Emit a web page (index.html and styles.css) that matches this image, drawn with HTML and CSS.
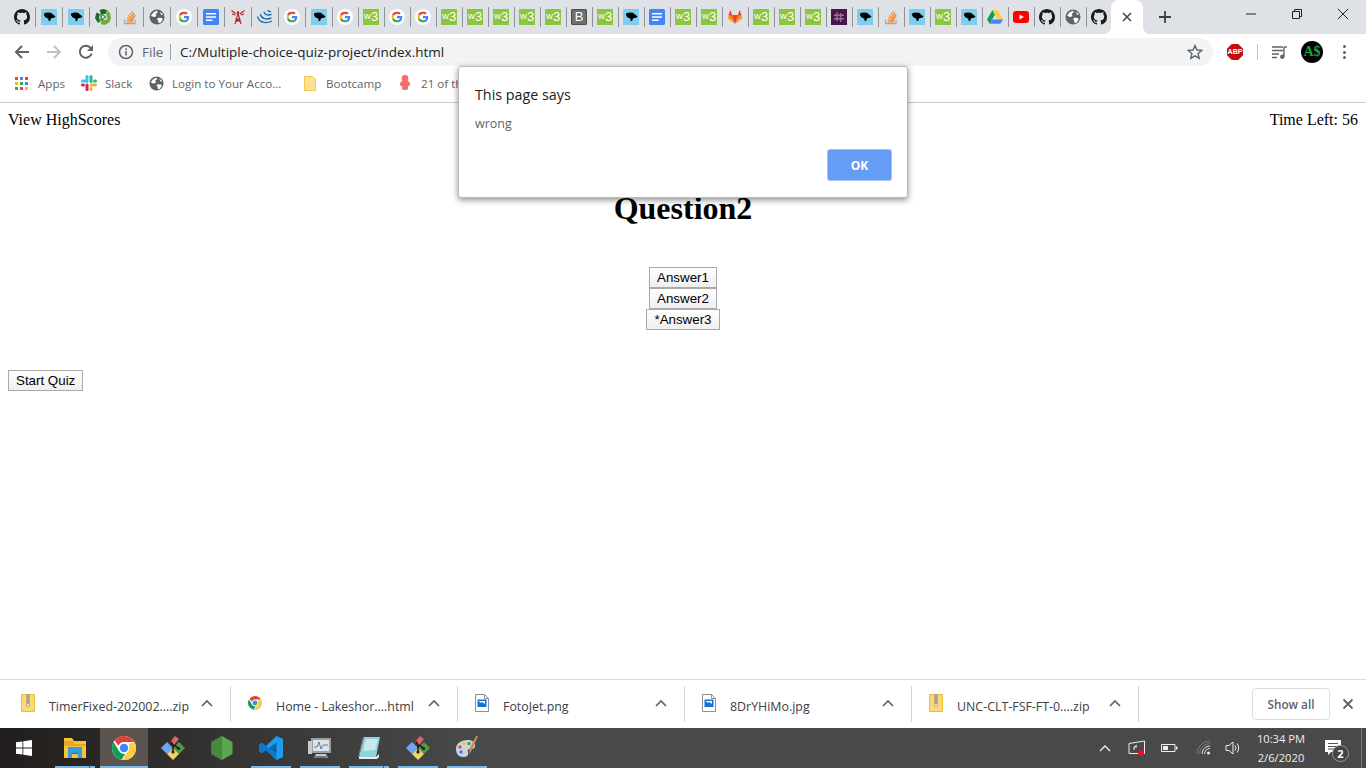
FILE: index.html
```html
<!DOCTYPE html>
<html lang="en">
<head>
<meta charset="utf-8">
<title>Multiple choice quiz</title>
<link rel="stylesheet" href="styles.css">
</head>
<body>
<svg class="defs" aria-hidden="true">
  <symbol id="gh" viewBox="0 0 16 16"><path fill="#1b1b1b" d="M8 0C3.58 0 0 3.58 0 8c0 3.54 2.29 6.53 5.47 7.59.4.07.55-.17.55-.38 0-.19-.01-.82-.01-1.49-2.01.37-2.53-.49-2.69-.94-.09-.23-.48-.94-.82-1.13-.28-.15-.68-.52-.01-.53.63-.01 1.08.58 1.23.82.72 1.21 1.87.87 2.33.66.07-.52.28-.87.51-1.07-1.78-.2-3.64-.89-3.64-3.95 0-.87.31-1.59.82-2.15-.08-.2-.36-1.02.08-2.12 0 0 .67-.21 2.2.82.64-.18 1.32-.27 2-.27.68 0 1.36.09 2 .27 1.53-1.04 2.2-.82 2.2-.82.44 1.1.16 1.92.08 2.12.51.56.82 1.27.82 2.15 0 3.07-1.87 3.75-3.65 3.95.29.25.54.73.54 1.48 0 1.07-.01 1.93-.01 2.2 0 .21.15.46.55.38A8.013 8.013 0 0016 8c0-4.42-3.58-8-8-8z"/></symbol>
  <symbol id="pn" viewBox="0 0 16 16"><rect width="16" height="16" fill="#7fcdee"/><path fill="#000" d="M3 4.6 6 3.4l4 .4 2 1.6 2.6 2.1-1.5 1.3-3 .4-.9 2.5-1.4.5-.6-2.6-2.6-1-1.4-2.1z"/></symbol>
  <symbol id="rc" viewBox="0 0 16 16"><path fill="#1f6b2a" d="M4.500 1 8 0l4 1-1.500 4H6zM0 9l1.500-5.500 3.500 1.500-1 4 1.500 3L3 14z"/><path fill="#6fae3c" d="M12 1l3 3 1 5.500-3.500-.5-1.500-4zM5.500 12.500 7 11h4l1.500-2 3.500.5-2 4-4 2.500-3.500-.5z"/><path fill="#2e7d32" d="M5.500 4.500h1.500l4.500 3.500-4.500 3.500H5.500z"/><path fill="#e8f3e4" d="M6.800 6 9.800 8l-3 2z"/></symbol>
  <symbol id="so" viewBox="0 0 16 16"><path fill="none" stroke="#a8a8a8" stroke-width="1.200" d="M2.500 10.500v4.200h10.500v-4.200"/><path fill="none" stroke="#f27f22" stroke-width="1.100" d="M4.500 13h6.500M4.700 11l6.400.6M5.200 8.800l6.200 1.700M6.200 6.500l5.700 3M7.800 4.200l4.800 4.300M9.800 2.200l3.600 5.200"/></symbol>
  <symbol id="gl" viewBox="0 0 16 16"><circle cx="8" cy="8" r="7.500" fill="#5f6368"/><path fill="#fff" d="M2 6.500 5 3l3-1.200.8 1.400L6.600 5 7.500 7 5.500 8 3.400 7.600zM9 8.800l3.800.3 1 1.400-2.600 3.400-1.600.2-.4-2.400-1-1.200zM11 3l2 1.200.8 2-1.800-.6z"/></symbol>
  <symbol id="go" viewBox="0 0 16 16"><circle cx="8" cy="8" r="8" fill="#fff"/><svg x="2.500" y="2.500" width="11" height="11" viewBox="0 0 48 48"><path fill="#EA4335" d="M24 9.5c3.54 0 6.71 1.22 9.21 3.6l6.85-6.85C35.9 2.38 30.47 0 24 0 14.62 0 6.51 5.38 2.56 13.22l7.98 6.19C12.43 13.72 17.74 9.5 24 9.5z"/><path fill="#4285F4" d="M46.98 24.55c0-1.57-.15-3.09-.38-4.55H24v9.02h12.94c-.58 2.96-2.26 5.48-4.78 7.18l7.73 6c4.51-4.18 7.09-10.36 7.09-17.65z"/><path fill="#FBBC05" d="M10.53 28.59c-.48-1.45-.76-2.99-.76-4.59s.27-3.14.76-4.59l-7.98-6.19C.92 16.46 0 20.12 0 24c0 3.88.92 7.54 2.56 10.78l7.97-6.19z"/><path fill="#34A853" d="M24 48c6.48 0 11.93-2.13 16.03-5.81l-7.73-6c-2.15 1.45-4.92 2.3-8.3 2.3-6.26 0-11.57-4.22-13.47-9.91l-7.98 6.19C6.51 42.62 14.62 48 24 48z"/></svg></symbol>
  <symbol id="dc" viewBox="0 0 16 16"><rect width="16" height="16" rx="1.500" fill="#4285f4"/><path fill="#fff" d="M3 4h10v1.500H3zM3 7.200h10v1.500H3zM3 10.400h6.500v1.500H3z"/></symbol>
  <symbol id="tw" viewBox="0 0 16 16"><path fill="none" stroke="#b3262c" stroke-width="1.100" d="M8 4 5 15M8 4l3 11M6 10h4M5.400 13l5-3M10.600 13l-5-3M1.500 1.500 6 5M14.500 1.500 10 5M2 5l3 1M14 5l-3 1"/><circle cx="8" cy="3.500" r="1.300" fill="#b3262c"/></symbol>
  <symbol id="jq" viewBox="0 0 16 16"><path fill="none" stroke="#1769aa" stroke-width="1.300" d="M.8 7.500c.3 4.600 6.500 8.500 14.200 4.500M3.500 5c.2 4 5.200 6.600 11 3.800M7 2.800c.2 2.600 3.600 4.200 7.500 2.500M11 1c0 1.200 1.400 2 3 1.400"/></symbol>
  <symbol id="gi" viewBox="0 0 16 16"><path fill="#e24329" d="M8 15 5 6h6z"/><path fill="#fc6d26" d="M8 15 1.500 6H5zM8 15l6.500-9H11z"/><path fill="#fca326" d="M1.500 6 .5 9.200 8 15zM14.500 6l1 3.200L8 15z"/><path fill="#e24329" d="M1.500 6H5L3.400 1zM14.500 6H11l1.600-5z"/></symbol>
  <symbol id="sl" viewBox="0 0 16 16"><rect width="16" height="16" fill="#4a154b"/><path fill="none" stroke="#8b7a8c" stroke-width="1.400" d="M6 3v9M9.600 4v9M3 6.200h10M3 9.800h10"/></symbol>
  <symbol id="dr" viewBox="0 0 16 16"><path fill="#0f9d58" d="M5.400 1 0 10.400l2.700 4.400L8 5.400z"/><path fill="#ffcd40" d="M5.400 1h5.200L16 10.400h-5.300z"/><path fill="#4285f4" d="M16 10.400H5.400l-2.700 4.400h10.700z"/></symbol>
  <symbol id="yt" viewBox="0 0 16 16"><rect y="2" width="16" height="12" rx="3" fill="#f00"/><path fill="#fff" d="M6.500 5.500 10.800 8l-4.300 2.500z"/></symbol>
  <symbol id="chrome" viewBox="0 0 24 24"><circle cx="12" cy="12" r="12" fill="#fff"/><path fill="#db4437" d="M12 0a12 12 0 0 1 10.400 6H12a6 6 0 0 0-5.600 3.800L2.600 4.400A12 12 0 0 1 12 0z"/><path fill="#0f9d58" d="M1.600 6 7 15a6 6 0 0 0 6.200 2.900L9.500 23.700A12 12 0 0 1 1.600 6z"/><path fill="#ffcd40" d="M22.400 6A12 12 0 0 1 10.500 24l5.200-9A6 6 0 0 0 16.400 8.400z"/><circle cx="12" cy="12" r="5.200" fill="#fff"/><circle cx="12" cy="12" r="4.200" fill="#4285f4"/></symbol>
  <symbol id="git" viewBox="0 0 24 24"><path fill="#6ea5f5" d="M0 12 6 6l6 6-6 6z"/><path fill="#4f9b4a" d="M12 12l6-6 6 6-6 6z"/><path fill="#f3d36b" d="m6 18 6-6 6 6-6 6z"/><path fill="#e4606d" d="m9 6 5-6 4 3-5 6z"/><path fill="none" stroke="#222" stroke-width="1.600" d="M10 5.500l2 3.500v7M13 9l4 3"/><circle cx="12" cy="16" r="1.600" fill="#222"/><circle cx="17.500" cy="12.500" r="1.600" fill="#222"/></symbol>
  <symbol id="zip" viewBox="0 0 14 18"><path fill="#fbd871" stroke="#e8bf45" d="M.5.5h13v17H.5z"/><path fill="#8f8f8f" d="M5.500.5h3v12h-3z"/><path fill="#ddd" d="M6.500 1.500h1v1h-1zM6.500 4h1v1h-1zM6.500 6.500h1v1h-1zM6 9.500h2v2.500H6z"/></symbol>
  <symbol id="img" viewBox="0 0 14 18"><path fill="#fff" stroke="#8a8f96" d="M.5.5h9l4 4v13H.5z"/><path fill="none" stroke="#8a8f96" d="M9.500.5v4h4"/><rect x="2.500" y="5.500" width="9" height="7.500" fill="#1273d6"/><path fill="#fff" d="M3.500 7 6 9l1-1.200L9.500 10l.5-2.500v-.5H3.500z"/></symbol>
</svg>

<div class="tabstrip">
  <div class="tab"><svg class="fav"><use href="#gh"/></svg></div>
  <div class="tab"><svg class="fav"><use href="#pn"/></svg></div>
  <div class="tab"><svg class="fav"><use href="#pn"/></svg></div>
  <div class="tab"><svg class="fav"><use href="#rc"/></svg></div>
  <div class="tab"><svg class="fav"><use href="#so"/></svg></div>
  <div class="tab"><svg class="fav"><use href="#gl"/></svg></div>
  <div class="tab"><svg class="fav"><use href="#go"/></svg></div>
  <div class="tab"><svg class="fav"><use href="#dc"/></svg></div>
  <div class="tab"><svg class="fav"><use href="#tw"/></svg></div>
  <div class="tab"><svg class="fav"><use href="#jq"/></svg></div>
  <div class="tab"><svg class="fav"><use href="#go"/></svg></div>
  <div class="tab"><svg class="fav"><use href="#pn"/></svg></div>
  <div class="tab n"><svg class="fav"><use href="#go"/></svg></div>
  <div class="tab n"><span class="w3"><i>w</i><b>3</b></span></div>
  <div class="tab n"><svg class="fav"><use href="#go"/></svg></div>
  <div class="tab n"><svg class="fav"><use href="#go"/></svg></div>
  <div class="tab n"><span class="w3"><i>w</i><b>3</b></span></div>
  <div class="tab n"><span class="w3"><i>w</i><b>3</b></span></div>
  <div class="tab n"><span class="w3"><i>w</i><b>3</b></span></div>
  <div class="tab n"><span class="w3"><i>w</i><b>3</b></span></div>
  <div class="tab n"><span class="w3"><i>w</i><b>3</b></span></div>
  <div class="tab n"><span class="bs">B</span></div>
  <div class="tab n"><span class="w3"><i>w</i><b>3</b></span></div>
  <div class="tab n"><svg class="fav"><use href="#pn"/></svg></div>
  <div class="tab n"><svg class="fav"><use href="#dc"/></svg></div>
  <div class="tab n"><span class="w3"><i>w</i><b>3</b></span></div>
  <div class="tab n"><span class="w3"><i>w</i><b>3</b></span></div>
  <div class="tab n"><svg class="fav"><use href="#gi"/></svg></div>
  <div class="tab n"><span class="w3"><i>w</i><b>3</b></span></div>
  <div class="tab n"><span class="w3"><i>w</i><b>3</b></span></div>
  <div class="tab n"><span class="w3"><i>w</i><b>3</b></span></div>
  <div class="tab n"><svg class="fav"><use href="#sl"/></svg></div>
  <div class="tab n"><svg class="fav"><use href="#pn"/></svg></div>
  <div class="tab n"><svg class="fav"><use href="#so"/></svg></div>
  <div class="tab n"><svg class="fav"><use href="#pn"/></svg></div>
  <div class="tab n"><span class="w3"><i>w</i><b>3</b></span></div>
  <div class="tab n"><svg class="fav"><use href="#pn"/></svg></div>
  <div class="tab n"><svg class="fav"><use href="#dr"/></svg></div>
  <div class="tab n"><svg class="fav"><use href="#yt"/></svg></div>
  <div class="tab n"><svg class="fav"><use href="#gh"/></svg></div>
  <div class="tab n"><svg class="fav"><use href="#gl"/></svg></div>
  <div class="tab last"><svg class="fav"><use href="#gh"/></svg></div>
  <div class="tab-active"><svg class="ico12" viewBox="0 0 12 12"><path d="M2 2l8 8M10 2l-8 8" stroke="#45494e" stroke-width="1.600" fill="none"/></svg></div>
  <div class="newtab"><svg class="ico14" viewBox="0 0 14 14"><path d="M7 1v12M1 7h12" stroke="#3c4043" stroke-width="1.800" fill="none"/></svg></div>
  <div class="winctl">
    <div class="win"><svg class="ico12" viewBox="0 0 12 12"><path d="M1 6h10" stroke="#222" fill="none"/></svg></div>
    <div class="win"><svg class="ico12" viewBox="0 0 12 12"><path d="M1.500 3.500h7v7h-7zM3.500 3.500v-2h7v7h-2" stroke="#222" fill="none"/></svg></div>
    <div class="win"><svg class="ico12" viewBox="0 0 12 12"><path d="M.8.8l10.400 10.400M11.200.8.8 11.200" stroke="#222" fill="none"/></svg></div>
  </div>
</div>

<div class="toolbar">
  <div class="navbtn"><svg class="ico16" viewBox="0 0 16 16"><path d="M15 8H2M8 2 2 8l6 6" stroke="#5f6368" stroke-width="2" fill="none"/></svg></div>
  <div class="navbtn"><svg class="ico16" viewBox="0 0 16 16"><path d="M1 8h13M8 2l6 6-6 6" stroke="#bdc1c6" stroke-width="2" fill="none"/></svg></div>
  <div class="navbtn"><svg class="ico16" viewBox="0 0 16 16"><path d="M13.600 9.500A6 6 0 1 1 12.200 3.600L14 5.500" stroke="#5f6368" stroke-width="2" fill="none"/><path d="M15 1v6H9z" fill="#5f6368"/></svg></div>
  <div class="omnibox">
    <svg class="ico16" viewBox="0 0 16 16"><circle cx="8" cy="8" r="6.500" stroke="#5f6368" stroke-width="1.500" fill="none"/><path d="M8 7v4.500M8 4.300v1.600" stroke="#5f6368" stroke-width="1.500" fill="none"/></svg>
    <span class="scheme">File</span>
    <span class="urlsep"></span>
    <span class="url">C:/Multiple-choice-quiz-project/index.html</span>
    <svg class="ico16 star" viewBox="0 0 16 16"><path d="M8 1.600l1.900 4.400 4.800.4-3.600 3.200 1.100 4.700L8 11.800l-4.200 2.500 1.100-4.700L1.300 6.400 6.100 6z" stroke="#5f6368" stroke-width="1.400" fill="none"/></svg>
  </div>
  <div class="ext">
    <div class="abp-cell"><span class="abp">ABP</span></div>
    <span class="extsep"></span>
    <div class="media"><svg class="ico16" viewBox="0 0 16 16"><path d="M0 3h11M0 6.500h11M0 10h7M0 13.500h5" stroke="#5f6368" stroke-width="1.300" fill="none"/><path d="M12 3v9.500" stroke="#5f6368" stroke-width="1.400"/><path d="M12 3h3" stroke="#5f6368" stroke-width="1.400"/><circle cx="10.300" cy="12.700" r="2.200" fill="#5f6368"/></svg></div>
    <div class="avatar">A$</div>
    <div class="dots"><i></i><i></i><i></i></div>
  </div>
</div>

<div class="bookmarks">
  <div class="bm bm-apps"><svg class="ico13" viewBox="0 0 13 13"><g><path fill="#ea4335" d="M0 0h3v3H0z"/><path fill="#4285f4" d="M5 0h3v3H5z"/><path fill="#ea4335" d="M10 0h3v3h-3z"/><path fill="#fbbc05" d="M0 5h3v3H0z"/><path fill="#34a853" d="M5 5h3v3H5z"/><path fill="#4285f4" d="M10 5h3v3h-3z"/><path fill="#34a853" d="M0 10h3v3H0z"/><path fill="#ea4335" d="M5 10h3v3H5z"/><path fill="#fbbc05" d="M10 10h3v3h-3z"/></g></svg><span>Apps</span></div>
  <div class="bm bm-slack"><svg class="ico16" viewBox="0 0 16 16"><path d="M1.500 6h3" stroke="#36c5f0" stroke-width="3" stroke-linecap="round"/><path d="M6 1.500v5" stroke="#36c5f0" stroke-width="3" stroke-linecap="round" fill="none"/><path d="M10 1.500v5" stroke="#2eb67d" stroke-width="3" stroke-linecap="round"/><path d="M14.500 6h-1" stroke="#2eb67d" stroke-width="3" stroke-linecap="round"/><path d="M10 10h4.500" stroke="#ecb22e" stroke-width="3" stroke-linecap="round"/><path d="M10 14.500v-1" stroke="#ecb22e" stroke-width="3" stroke-linecap="round"/><path d="M6 10v4.500" stroke="#e01e5a" stroke-width="3" stroke-linecap="round"/><path d="M1.500 10h1" stroke="#e01e5a" stroke-width="3" stroke-linecap="round"/></svg><span>Slack</span></div>
  <div class="bm bm-login"><svg class="ico15"><use href="#gl"/></svg><span>Login to Your Acco...</span></div>
  <div class="bm bm-boot"><svg class="ico13h" viewBox="0 0 12 15"><path d="M.5.5h8l3 2.500v11.500H.5z" fill="#fde293" stroke="#f2c94c"/></svg><span>Bootcamp</span></div>
  <div class="bm bm-21"><svg class="ico12h" viewBox="0 0 12 16"><circle cx="6" cy="3.500" r="3.400" fill="#f76c6c"/><path d="M3 6h6c1.500 1 2.500 2.500 2 4-.5 1-1.500 1-2 1v3c-.5 1.500-5.500 1.500-6 0v-3c-.5 0-1.500 0-2-1-.5-1.500.5-3 2-4z" fill="#f76c6c"/></svg><span>21 of th</span></div>
</div>

<main class="page">
  <div class="topline"><span>View HighScores</span><span>Time Left: 56</span></div>
  <h1 class="question">Question2</h1>
  <div class="answers">
    <button class="btn" type="button">Answer1</button>
    <button class="btn" type="button">Answer2</button>
    <button class="btn" type="button">*Answer3</button>
  </div>
  <button class="btn start" type="button">Start Quiz</button>
</main>

<div class="downloads">
  <div class="dl"><svg class="dlico"><use href="#zip"/></svg><span class="dlname">TimerFixed-202002....zip</span><svg class="caret" viewBox="0 0 12 8"><path d="M1 7l5-5 5 5" stroke="#5f6368" stroke-width="1.700" fill="none"/></svg></div>
  <div class="dl"><svg class="dlico"><use href="#chrome"/></svg><span class="dlname">Home - Lakeshor....html</span><svg class="caret" viewBox="0 0 12 8"><path d="M1 7l5-5 5 5" stroke="#5f6368" stroke-width="1.700" fill="none"/></svg></div>
  <div class="dl"><svg class="dlico"><use href="#img"/></svg><span class="dlname">FotoJet.png</span><svg class="caret" viewBox="0 0 12 8"><path d="M1 7l5-5 5 5" stroke="#5f6368" stroke-width="1.700" fill="none"/></svg></div>
  <div class="dl"><svg class="dlico"><use href="#img"/></svg><span class="dlname">8DrYHiMo.jpg</span><svg class="caret" viewBox="0 0 12 8"><path d="M1 7l5-5 5 5" stroke="#5f6368" stroke-width="1.700" fill="none"/></svg></div>
  <div class="dl"><svg class="dlico"><use href="#zip"/></svg><span class="dlname">UNC-CLT-FSF-FT-0....zip</span><svg class="caret" viewBox="0 0 12 8"><path d="M1 7l5-5 5 5" stroke="#5f6368" stroke-width="1.700" fill="none"/></svg></div>
  <div class="showall">Show all</div>
  <div class="dlclose"><svg class="ico12" viewBox="0 0 12 12"><path d="M1.500 1.500l9 9M10.500 1.500l-9 9" stroke="#5f6368" stroke-width="1.800" fill="none"/></svg></div>
</div>

<footer class="taskbar">
  <div class="startbtn"><svg class="ico16" viewBox="0 0 16 16"><path fill="#fff" d="M0 2.300 6.500 1.400v6.200H0zM7.300 1.300 16 0v7.600H7.300zM0 8.400h6.500v6.200L0 13.700zM7.300 8.400H16V16l-8.700-1.300z"/></svg></div>
  <div class="tb on split"><svg class="tbico" viewBox="0 0 24 24"><path fill="#f5c43c" d="M1 2h8l2 3h12v17H1z"/><path fill="#e8a52a" d="M1 5h9l2 3h11v2H1z"/><path fill="#3a9bdc" d="M5 11h14v11h-4v-5H9v5H5z"/><path fill="#1f6fb0" d="M9 17h6v1H9z"/></svg></div>
  <div class="tb on active"><svg class="tbico wide"><use href="#chrome"/></svg></div>
  <div class="tb"><svg class="tbico"><use href="#git"/></svg></div>
  <div class="tb"><svg class="tbico" viewBox="0 0 24 24"><path fill="#5aa650" d="M12 0l10.500 6v12L12 24 1.500 18V6z"/><path fill="#45893f" d="M12 0v24L1.500 18V6z"/></svg></div>
  <div class="tb on"><svg class="tbico" viewBox="0 0 24 24"><path fill="#1f9cf0" d="M17.500 0 24 3v18l-6.500 3L7 14l-4 3-3-1.500v-7L3 7l4 3z"/><path fill="#0065a9" d="M17.500 6.500v11L10 12z"/><path fill="#0a7cc7" d="M0 8.500 3 7l14.500 10.500V24L7 14l-4 3-3-1.500z"/></svg></div>
  <div class="tb on"><svg class="tbico" viewBox="0 0 24 24"><path fill="#9aa0a6" d="M3 2h20v15H3z"/><path fill="#dfe3e6" d="M5 4h16v11H5z"/><path d="M6 11h3l2-5 2 7 2-4h5" stroke="#4a7fb0" fill="none"/><path fill="#c8cbce" d="M0 5h4v13H0zM8 18h10l2 4H6z"/><path fill="#777" d="M7 20h12v2H7z"/></svg></div>
  <div class="tb on split"><svg class="tbico" viewBox="0 0 24 24"><path fill="#8fd4dc" d="M7 1h16l-4 20H2z"/><path fill="#c9e9ee" d="M9 3h12l-3 11-12 1z"/><path fill="#e8eef0" d="M2 21h17l3-3v3l-2 2H2z"/><path fill="#7a8a90" d="M2 21 7 1H6L1 21z"/></svg></div>
  <div class="tb on"><svg class="tbico"><use href="#git"/></svg></div>
  <div class="tb on"><svg class="tbico" viewBox="0 0 24 24"><path fill="#c9d5e6" d="M1 13C1 7 7 4 13 4c4 0 7 2 7 6 0 3-3 3-5 3-2 0-3 1-2 3 1 3-1 5-5 5-4 0-7-3-7-8z"/><circle cx="5" cy="11" r="1.700" fill="#e0483e"/><circle cx="9" cy="7.500" r="1.700" fill="#f2c230"/><circle cx="14" cy="7.500" r="1.700" fill="#4f9b4a"/><circle cx="6" cy="16" r="1.700" fill="#3b78d8"/><path d="M23 0l-6 14-3 4 .5-5L21 0z" fill="#c98a4b"/></svg></div>
  <div class="tray">
    <div class="t-caret"><svg class="ico14" viewBox="0 0 14 14"><path d="M2 10l5-5 5 5" stroke="#eee" stroke-width="1.300" fill="none"/></svg></div>
    <div class="t-net"><svg class="ico16wide" viewBox="0 0 17 16"><path d="M1 3.500 16.500 1v12.500H1z" stroke="#eee" fill="none"/><path d="M6 10V7h3M9 5l-3 2" stroke="#eee" fill="none"/><circle cx="13" cy="13" r="3" fill="#e81123"/></svg></div>
    <div class="t-batt"><svg class="ico16wide" viewBox="0 0 17 16"><path d="M.5 4.500h13.500v7H.5z" stroke="#eee" fill="none"/><path d="M2 6h5v4H2z" fill="#eee"/><path d="M15 6.500h1.500v3H15z" fill="#eee"/></svg></div>
    <div class="t-wifi"><svg class="ico16" viewBox="0 0 16 16"><path d="M1 14A13 13 0 0 1 14 1M3.500 14A10.500 10.500 0 0 1 14 3.500" stroke="#777" fill="none"/><path d="M6 14a8 8 0 0 1 8-8M8.500 14A5.500 5.500 0 0 1 14 8.500" stroke="#ddd" fill="none"/><circle cx="12.500" cy="13" r="1.500" fill="#eee"/></svg></div>
    <div class="t-vol"><svg class="ico16" viewBox="0 0 16 16"><path d="M1 5.500h3L8 2v12l-4-3.500H1z" stroke="#eee" fill="none"/><path d="M10 5.500a4 4 0 0 1 0 5M12 3.500a7 7 0 0 1 0 9" stroke="#eee" fill="none"/></svg></div>
    <div class="t-clock"><span>10:34 PM</span><span>2/6/2020</span></div>
    <div class="t-note"><svg class="ico16" viewBox="0 0 16 16"><path d="M0 0h16v12H6l-3 3v-3H0z" fill="#fff"/><path d="M3 3.500h10M3 6.500h10M3 9h6" stroke="#555" fill="none"/></svg><span class="badge">2</span></div>
    <div class="t-gap"></div>
    <div class="t-show"></div>
  </div>
</footer>

<div class="dialog" role="alertdialog">
  <div class="dlg-title">This page says</div>
  <div class="dlg-msg">wrong</div>
  <div class="dlg-actions"><button class="dlg-ok" type="button">OK</button></div>
</div>
</body>
</html>
```
FILE: styles.css
```css
* { box-sizing: border-box; }
html, body { margin: 0; padding: 0; height: 100%; }
body {
  width: 1366px;
  height: 768px;
  overflow: hidden;
  display: flex;
  flex-direction: column;
  background: #fff;
  color: #000;
  font-family: "Liberation Serif", serif;
  font-size: 16px;
}
.defs { position: absolute; width: 0; height: 0; overflow: hidden; }

.fav, .ico16 { width: 16px; height: 16px; display: block; flex: none; }
.ico12 { width: 12px; height: 12px; display: block; flex: none; }
.ico13 { width: 13px; height: 13px; display: block; flex: none; }
.ico14 { width: 14px; height: 14px; display: block; flex: none; }
.ico15 { width: 15px; height: 15px; display: block; flex: none; }
.ico13h { width: 12px; height: 15px; display: block; flex: none; }
.ico12h { width: 12px; height: 16px; display: block; flex: none; }
.ico16wide { width: 17px; height: 16px; display: block; flex: none; }

/* text favicons */
.w3 {
  width: 16px;
  height: 16px;
  background: #8cc63f;
  color: #fff;
  display: flex;
  align-items: center;
  padding-left: 1px;
  font-family: "Liberation Sans", sans-serif;
}
.w3 i { font-style: normal; font-size: 9.500px; line-height: 10px; height: 10px; margin-top: -3px; }
.w3 b { font-weight: normal; font-size: 13px; line-height: 14px; }
.bs {
  width: 16px;
  height: 16px;
  background: #6e6e6e;
  border: 1px solid #4d4d4d;
  border-radius: 1px;
  color: #fff;
  display: block;
  text-align: center;
  font: 13px/14px "Liberation Sans", sans-serif;
}

/* tab strip */
.tabstrip {
  height: 34px;
  flex: none;
  display: flex;
  background: #dee1e6;
  padding-left: 9px;
}
.tab {
  width: 27px;
  height: 20px;
  margin-top: 7px;
  padding: 2px 5px 0 5px;
  border-right: 1px solid #8f9297;
  flex: none;
}
.tab.n { width: 26px; padding-left: 4px; }
.tab.last { width: 24px; padding-left: 4px; padding-right: 4px; border-right: 0; }
.tab-active {
  position: relative;
  width: 32px;
  height: 34px;
  flex: none;
  background: #fff;
  border-radius: 8px 8px 0 0;
  display: flex;
  align-items: center;
  justify-content: center;
}
.tab-active::before, .tab-active::after {
  content: "";
  position: absolute;
  bottom: 0;
  width: 8px;
  height: 8px;
}
.tab-active::before { left: -8px; background: radial-gradient(circle at 0 0, #dee1e6 8px, #fff 8.500px); }
.tab-active::after { right: -8px; background: radial-gradient(circle at 100% 0, #dee1e6 8px, #fff 8.500px); }
.newtab { width: 44px; height: 34px; flex: none; display: flex; align-items: center; justify-content: center; }
.winctl { margin-left: auto; display: flex; }
.win { width: 46px; height: 28px; display: flex; align-items: center; justify-content: center; }

/* toolbar */
.toolbar {
  height: 36px;
  flex: none;
  background: #fff;
  display: flex;
  align-items: center;
  padding-left: 6px;
}
.navbtn { width: 32px; height: 28px; display: flex; align-items: center; justify-content: center; flex: none; }
.omnibox {
  width: 1105px;
  height: 28px;
  margin-left: 6px;
  border-radius: 14px;
  background: #f1f3f4;
  display: flex;
  align-items: center;
  padding: 0 10px;
  flex: none;
  font-family: "Open Sans", sans-serif;
}
.scheme { margin-left: 8px; width: 21px; font-size: 13.500px; color: #5f6368; white-space: nowrap; }
.urlsep { width: 1px; height: 16px; margin-left: 7px; background: #9aa0a6; }
.url { margin-left: 9px; font-size: 13.500px; color: #202124; white-space: nowrap; }
.star { margin-left: auto; }
.ext { flex: 1; display: flex; align-items: center; height: 28px; }
.abp-cell { margin-left: 14px; }
.abp {
  width: 16px;
  height: 16px;
  display: block;
  background: #c70d0c;
  clip-path: polygon(30% 0, 70% 0, 100% 30%, 100% 70%, 70% 100%, 30% 100%, 0 70%, 0 30%);
  color: #fff;
  font: bold 7px/16px "Liberation Sans", sans-serif;
  text-align: center;
}
.extsep { width: 1px; height: 16px; margin-left: 14px; background: #c4c7ca; }
.media { margin-left: 14px; }
.avatar {
  width: 22px;
  height: 22px;
  margin-left: 13px;
  border-radius: 50%;
  background: #000;
  color: #1fa33a;
  font: bold 14px "Liberation Serif", serif;
  display: flex;
  align-items: center;
  justify-content: center;
  flex: none;
}
.dots { margin-left: 20px; display: flex; flex-direction: column; gap: 2.500px; }
.dots i { width: 3px; height: 3px; border-radius: 50%; background: #5f6368; display: block; }

/* bookmarks */
.bookmarks {
  height: 33px;
  flex: none;
  background: #fff;
  border-bottom: 1px solid #ccc;
  display: flex;
  align-items: center;
  padding: 0 0 6px 15px;
  font: 11.600px "Open Sans", sans-serif;
  color: #5f6368;
}
.bm { display: flex; align-items: center; flex: none; white-space: nowrap; }
.bm-apps { width: 66px; gap: 10px; }
.bm-slack { width: 68px; gap: 8px; }
.bm-login { width: 155px; gap: 8px; }
.bm-boot { width: 95px; gap: 10px; }
.bm-21 { gap: 10px; }

/* page */
.page { flex: 1; padding: 8px; background: #fff; }
.topline { display: flex; justify-content: space-between; height: 18px; line-height: 18px; }
.question { margin: 61px 0 0; text-align: center; font-size: 32px; line-height: 37px; font-weight: bold; }
.answers { display: flex; flex-direction: column; align-items: center; margin-top: 40px; }
.btn {
  height: 21px;
  padding: 0 7px;
  border: 1px solid #a9a9a9;
  border-radius: 0;
  background: linear-gradient(#fff, #efefef);
  color: #000;
  font: 13.333px "Liberation Sans", Arial, sans-serif;
  display: block;
}
.start { margin-top: 40px; }

/* downloads */
.downloads {
  height: 49px;
  flex: none;
  background: #fff;
  border-top: 1px solid #dadce0;
  display: flex;
  align-items: center;
  padding-left: 4px;
  font: 12.400px "Open Sans", sans-serif;
  color: #3c4043;
}
.dl {
  width: 227px;
  height: 36px;
  flex: none;
  border-right: 1px solid #d0d3d6;
  display: flex;
  align-items: center;
  padding-left: 17px;
  padding-right: 17px;
}
.dlico { width: 14px; height: 18px; flex: none; margin-bottom: 2px; }
.dlname { margin-left: 14px; padding-top: 4px; white-space: nowrap; }
.caret { width: 12px; height: 8px; margin-left: auto; flex: none; margin-bottom: 2px; }
.showall {
  width: 78px;
  height: 32px;
  margin-left: auto;
  border: 1px solid #dadce0;
  border-radius: 4px;
  display: flex;
  align-items: center;
  justify-content: center;
  font-size: 11.700px;
  font-weight: 600;
  color: #5f6368;
  flex: none;
}
.dlclose { width: 36px; display: flex; justify-content: center; flex: none; }

/* taskbar */
.taskbar {
  height: 40px;
  flex: none;
  display: flex;
  background: linear-gradient(90deg, #211d1c 0, #2a2725 100px, #3c3b3a 300px, #494949 480px);
}
.startbtn { width: 48px; height: 40px; display: flex; align-items: center; justify-content: center; flex: none; margin-right: 3px; }
.tb { position: relative; width: 48px; height: 40px; margin-right: 1px; display: flex; align-items: center; justify-content: center; flex: none; }
.tb.active { background: #5c544f; }
.tb.on::after { content: ""; position: absolute; left: 4px; right: 4px; bottom: 0; height: 2px; background: #76b9ed; }
.tb.active::after { left: 0; right: 0; }
.tb.split::before { content: ""; position: absolute; right: 9px; bottom: 0; width: 1px; height: 2px; background: #2f5f86; z-index: 1; }
.tbico { width: 24px; height: 24px; display: block; }
.tray { margin-left: auto; display: flex; align-items: center; height: 40px; color: #eee; }
.t-caret, .t-net, .t-batt, .t-wifi, .t-vol, .t-note { display: flex; align-items: center; justify-content: center; flex: none; height: 40px; }
.t-caret { width: 30px; }
.t-net { width: 33px; }
.t-batt { width: 32px; }
.t-wifi { width: 38px; }
.t-vol { width: 20px; }
.t-clock {
  width: 76px;
  display: flex;
  flex-direction: column;
  align-items: center;
  gap: 3px;
  font: 11.200px/16px "Open Sans", sans-serif;
  flex: none;
}
.t-note { width: 28px; position: relative; }
.badge {
  position: absolute;
  left: 13px;
  top: 17px;
  width: 17px;
  height: 17px;
  border-radius: 50%;
  border: 1px solid #999;
  background: #444;
  color: #fff;
  font: bold 11px/15px "Open Sans", sans-serif;
  text-align: center;
}
.t-gap { width: 14px; flex: none; }
.t-show { width: 5px; height: 40px; border-left: 1px solid #7a7a7a; flex: none; }

/* dialog */
.dialog {
  position: absolute;
  left: 458px;
  top: 66px;
  width: 450px;
  height: 132px;
  background: #fff;
  border: 1px solid #bbb;
  border-radius: 3px;
  box-shadow: 0 2px 6px rgba(0, 0, 0, 0.45);
  padding: 18px 15px 15px 16px;
  font-family: "Open Sans", sans-serif;
}
.dlg-title { font-size: 14.300px; line-height: 20px; color: #202124; }
.dlg-msg { margin-top: 10px; font-size: 12.500px; line-height: 17px; color: #5f6368; }
.dlg-actions { display: flex; justify-content: flex-end; margin-top: 17px; }
.dlg-ok {
  width: 65px;
  height: 32px;
  border: 1px solid #a3c3f8;
  border-radius: 3px;
  background: #659cf6;
  color: #fff;
  font: bold 12px "Open Sans", sans-serif;
}
```
